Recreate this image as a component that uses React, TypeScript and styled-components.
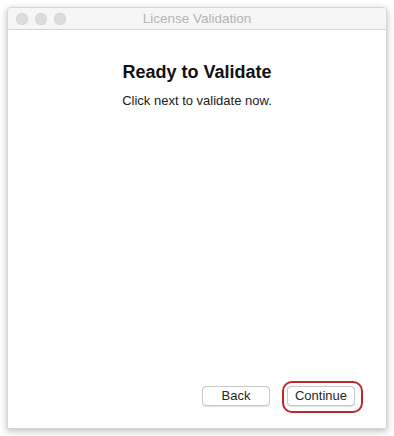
import React from "react";
import styled, { createGlobalStyle } from "styled-components";

const Global = createGlobalStyle`
  html, body { margin: 0; padding: 0; background: #ffffff; }
  body { font-family: "Liberation Sans", Arial, sans-serif; }
  #root { width: 394px; height: 436px; }
`;

const Page = styled.div`
  width: 394px;
  height: 436px;
  padding: 7px;
  box-sizing: border-box;
  background: #ffffff;
`;

const Window = styled.div`
  width: 380px;
  height: 422px;
  display: flex;
  flex-direction: column;
  background: #ffffff;
  border: 1px solid #d6d6d6;
  box-sizing: border-box;
  border-radius: 4px 4px 0 0;
  box-shadow: 0 2px 7px rgba(0, 0, 0, 0.28);
  overflow: hidden;
`;

const TitleBar = styled.div`
  height: 21px;
  flex: none;
  display: flex;
  align-items: center;
  position: relative;
  background: #f6f6f6;
  border-bottom: 1px solid #d4d4d4;
`;

const Lights = styled.div`
  display: flex;
  gap: 7px;
  padding-left: 8px;
`;

const Light = styled.span`
  width: 12px;
  height: 12px;
  border-radius: 50%;
  background: #dcdcdc;
  box-shadow: inset 0 0 0 0.5px #cdcdcd;
`;

const Title = styled.div`
  position: absolute;
  left: 0;
  right: 0;
  top: 0;
  bottom: 0;
  display: flex;
  align-items: center;
  justify-content: center;
  font-size: 13.5px;
  color: #b4b4b4;
  pointer-events: none;
`;

const Body = styled.div`
  flex: 1;
  display: flex;
  flex-direction: column;
  align-items: center;
  padding-top: 31px;
`;

const Heading = styled.h1`
  margin: 0;
  font-size: 18px;
  font-weight: bold;
  color: #111111;
  line-height: 22px;
`;

const SubText = styled.p`
  margin: 10px 0 0 0;
  font-size: 13px;
  color: #1a1a1a;
  line-height: 16px;
`;

const Footer = styled.div`
  flex: none;
  display: flex;
  justify-content: flex-end;
  align-items: center;
  gap: 17px;
  padding: 0 31px 22px 0;
`;

const Button = styled.button<{ $width: number; $highlight?: boolean }>`
  position: relative;
  width: ${(p) => p.$width}px;
  height: 20px;
  padding: 0;
  border: 1px solid #c8c8c8;
  border-radius: 4px;
  background: #ffffff;
  box-shadow: 0 0.5px 1px rgba(0, 0, 0, 0.12);
  font-family: "Liberation Sans", Arial, sans-serif;
  font-size: 13px;
  color: #262626;
  line-height: 18px;
  &::after {
    content: "";
    display: ${(p) => (p.$highlight ? "block" : "none")};
    position: absolute;
    left: -6px;
    right: -9px;
    top: -6px;
    bottom: -8px;
    border: 2px solid #c0252d;
    border-radius: 10px;
  }
`;

export default function App() {
  return (
    <>
      <Global />
      <Page>
        <Window>
          <TitleBar>
            <Lights>
              <Light />
              <Light />
              <Light />
            </Lights>
            <Title>License Validation</Title>
          </TitleBar>
          <Body>
            <Heading>Ready to Validate</Heading>
            <SubText>Click next to validate now.</SubText>
          </Body>
          <Footer>
            <Button $width={68}>Back</Button>
            <Button $width={68} $highlight>
              Continue
            </Button>
          </Footer>
        </Window>
      </Page>
    </>
  );
}
